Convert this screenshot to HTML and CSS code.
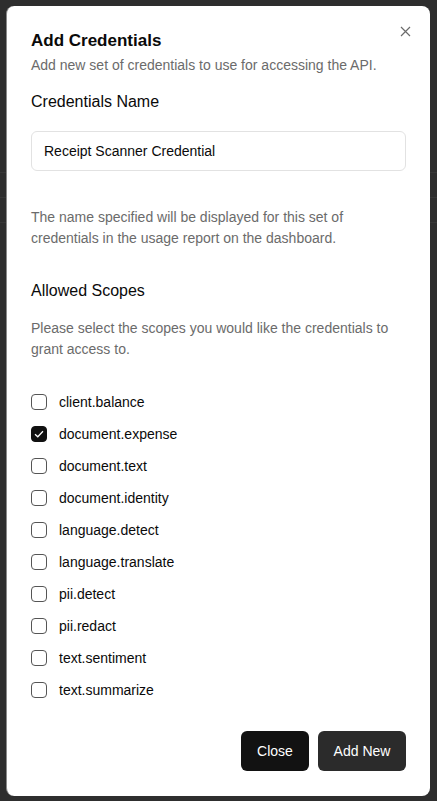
FILE: index.html
```html
<!DOCTYPE html>
<html lang="en">
<head>
<meta charset="utf-8">
<title>Add Credentials</title>
<link rel="stylesheet" href="styles.css">
</head>
<body>
<div class="page">
  <div class="page-row"></div>
  <div class="page-row"></div>
  <div class="page-row"></div>
</div>
<div class="backdrop">
  <div class="modal">
    <button class="close-x" aria-label="Close">
      <svg width="11" height="11" viewBox="0 0 11 11"><path d="M1 1 L10 10 M10 1 L1 10" stroke="#6b6b6b" stroke-width="1.2" fill="none"/></svg>
    </button>
    <h2 class="title">Add Credentials</h2>
    <p class="subtitle">Add new set of credentials to use for accessing the API.</p>
    <label class="section-label" for="cred-name">Credentials Name</label>
    <input id="cred-name" class="text-input" type="text" value="Receipt Scanner Credential">
    <p class="help">The name specified will be displayed for this set of credentials in the usage report on the dashboard.</p>
    <h3 class="section-label scopes-label">Allowed Scopes</h3>
    <p class="help scopes-help">Please select the scopes you would like the credentials to grant access to.</p>
    <ul class="scopes">
      <li class="scope"><span class="box"></span>client.balance</li>
      <li class="scope"><span class="box checked"><svg width="10" height="8" viewBox="0 0 10 8"><path d="M1 4.2 L3.8 6.8 L9 1.2" stroke="#fff" stroke-width="1.3" fill="none"/></svg></span>document.expense</li>
      <li class="scope"><span class="box"></span>document.text</li>
      <li class="scope"><span class="box"></span>document.identity</li>
      <li class="scope"><span class="box"></span>language.detect</li>
      <li class="scope"><span class="box"></span>language.translate</li>
      <li class="scope"><span class="box"></span>pii.detect</li>
      <li class="scope"><span class="box"></span>pii.redact</li>
      <li class="scope"><span class="box"></span>text.sentiment</li>
      <li class="scope"><span class="box"></span>text.summarize</li>
    </ul>
    <div class="actions">
      <button class="btn btn-close">Close</button>
      <button class="btn btn-add">Add New</button>
    </div>
  </div>
</div>
</body>
</html>
```
FILE: styles.css
```css
* { box-sizing: border-box; }
html, body { margin: 0; padding: 0; }
body {
  width: 437px;
  height: 801px;
  background: #2e2e2e;
  font-family: "Liberation Sans", Arial, sans-serif;
  position: relative;
  overflow: hidden;
}
.page { padding-top: 172px; }
.page-row {
  height: 25px;
  border-top: 1px solid #383838;
}
.backdrop {
  position: absolute;
  inset: 0;
  padding: 6px 7px 5px 6px;
}
.modal {
  position: relative;
  height: 790px;
  background: #fff;
  border-radius: 8px;
  border-left: 1px solid #8a8a8a;
  padding: 24px 24px 25px 24px;
  display: flex;
  flex-direction: column;
}
.close-x {
  position: absolute;
  top: 20px;
  right: 19px;
  border: 0;
  background: none;
  padding: 0;
  width: 11px;
  height: 11px;
  display: block;
}
.close-x svg { display: block; }
.title {
  margin: 0;
  font-size: 17px;
  line-height: 22px;
  font-weight: 700;
  color: #0a0a0a;
}
.subtitle {
  margin: 3px 0 0;
  font-size: 14px;
  line-height: 20px;
  color: #6b6b6b;
}
.section-label {
  display: block;
  margin: 17px 0 0;
  font-size: 16px;
  line-height: 20px;
  font-weight: 400;
  color: #0a0a0a;
}
.text-input {
  margin-top: 19px;
  width: 100%;
  height: 40px;
  border: 1px solid #e2e2e2;
  border-radius: 6px;
  padding: 0 12px;
  font-family: "Liberation Sans", Arial, sans-serif;
  font-size: 14px;
  color: #0a0a0a;
  background: #fff;
}
.help {
  margin: 36px 0 0;
  font-size: 14px;
  line-height: 21px;
  color: #6b6b6b;
}
.scopes-label { margin-top: 32px; }
.scopes-help { margin-top: 17px; }
.scopes {
  list-style: none;
  margin: 32px 0 0;
  padding: 0;
  display: flex;
  flex-direction: column;
  gap: 12px;
}
.scope {
  display: flex;
  align-items: center;
  gap: 12px;
  height: 20px;
  font-size: 14px;
  color: #0a0a0a;
}
.box {
  width: 16px;
  height: 16px;
  border: 1.5px solid #555;
  border-radius: 4px;
  display: flex;
  align-items: center;
  justify-content: center;
  flex: none;
}
.box.checked {
  background: #111;
  border-color: #111;
}
.box svg { display: block; }
.actions {
  margin-top: auto;
  display: flex;
  justify-content: flex-end;
  gap: 9px;
}
.btn {
  height: 40px;
  border: 0;
  border-radius: 6px;
  color: #fff;
  font-family: "Liberation Sans", Arial, sans-serif;
  font-size: 14px;
  padding: 0;
  white-space: nowrap;
  text-align: center;
}
.btn-close { background: #121212; width: 68px; }
.btn-add { background: #2b2b2b; width: 88px; }
```
